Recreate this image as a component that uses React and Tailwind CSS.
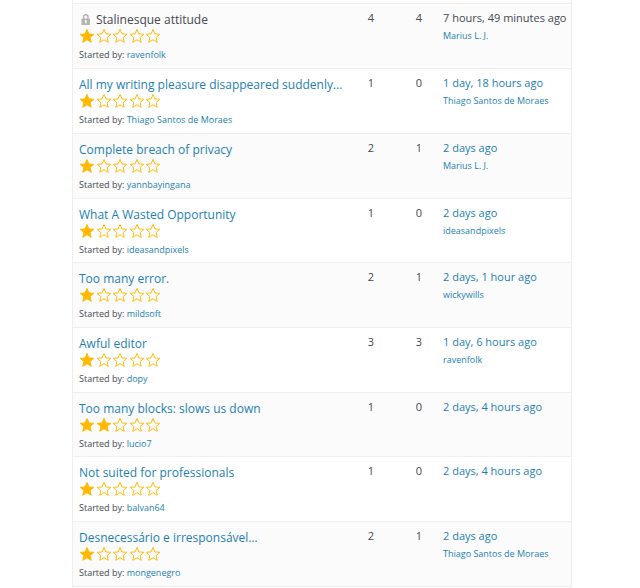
const topics = [
  { title: "Stalinesque attitude", closed: true, rating: 1, author: "ravenfolk", voices: 4, replies: 4, freshness: "7 hours, 49 minutes ago", last: "Marius L. J." },
  { title: "All my writing pleasure disappeared suddenly…", rating: 1, author: "Thiago Santos de Moraes", voices: 1, replies: 0, freshness: "1 day, 18 hours ago", last: "Thiago Santos de Moraes" },
  { title: "Complete breach of privacy", rating: 1, author: "yannbayingana", voices: 2, replies: 1, freshness: "2 days ago", last: "Marius L. J." },
  { title: "What A Wasted Opportunity", rating: 1, author: "ideasandpixels", voices: 1, replies: 0, freshness: "2 days ago", last: "ideasandpixels" },
  { title: "Too many error.", rating: 1, author: "mildsoft", voices: 2, replies: 1, freshness: "2 days, 1 hour ago", last: "wickywills" },
  { title: "Awful editor", rating: 1, author: "dopy", voices: 3, replies: 3, freshness: "1 day, 6 hours ago", last: "ravenfolk" },
  { title: "Too many blocks: slows us down", rating: 2, author: "lucio7", voices: 1, replies: 0, freshness: "2 days, 4 hours ago" },
  { title: "Not suited for professionals", rating: 1, author: "balvan64", voices: 1, replies: 0, freshness: "2 days, 4 hours ago" },
  { title: "Desnecessário e irresponsável…", rating: 1, author: "mongenegro", voices: 2, replies: 1, freshness: "2 days ago", last: "Thiago Santos de Moraes" },
];

const STAR = "M10 1.8l2.4 5.6 6.1.5-4.6 4 1.4 6-5.3-3.2-5.3 3.2 1.4-6-4.6-4 6.1-.5z";

const Stars = ({ rating }) => (
  <div
    className="flex h-4 w-[82px] items-center justify-between"
    role="img"
    aria-label={`${rating} out of 5 stars`}
  >
    {[1, 2, 3, 4, 5].map((n) => (
      <svg key={n} viewBox="0 0 20 20" className="size-4">
        <path
          d={STAR}
          fill={n <= rating ? "#ffb900" : "none"}
          stroke="#ffb900"
          strokeWidth="1.2"
        />
      </svg>
    ))}
  </div>
);

const Lock = () => (
  <svg viewBox="0 0 10 12" className="ml-0.5 mr-[5px] h-3 w-2.5 shrink-0" aria-hidden="true">
    <path d="M2.6 4.7V2.9a2.2 2.2 0 0 1 4.4 0v1.8" fill="none" stroke="#b4b4b4" strokeWidth="1.4" />
    <rect x="0.5" y="4.5" width="8.5" height="6.5" rx="0.5" fill="#b4b4b4" />
    <path d="M4.8 6a.9.9 0 0 1 .5 1.7l.3 1.6H4l.3-1.6A.9.9 0 0 1 4.8 6z" fill="#fafafa" />
  </svg>
);

const TopicRow = ({ topic }) => {
  const tone = topic.closed ? "text-[#444950]" : "text-[#1e7fb0]";

  return (
    <tr className="h-[65px] border-t border-[#eeeeee] align-top odd:bg-[#fbfbfb] nth-[3n+4]:h-[64px]">
      <td className="pl-1.5 pt-[7px]">
        <a href="#" className={`flex items-center text-[12px] leading-[17px] ${tone}`}>
          {topic.closed && <Lock />}
          {topic.title}
        </a>
        <Stars rating={topic.rating} />
        <p className="mt-[3px] text-[9px] leading-4">
          Started by:{" "}
          <a href="#" className="text-[#1e7fb0]">{topic.author}</a>
        </p>
      </td>
      <td className="pt-1.5 text-center text-[11px] leading-4">{topic.voices}</td>
      <td className="pt-1.5 text-center text-[11px] leading-4">{topic.replies}</td>
      <td className="whitespace-nowrap pt-1.5 text-[11px] leading-4">
        <a href="#" className={tone}>{topic.freshness}</a>
        {topic.last && (
          <p className="mt-0.5 text-[9px] leading-4">
            <a href="#" className="text-[#1e7fb0]">{topic.last}</a>
          </p>
        )}
      </td>
    </tr>
  );
};

export default function App() {
  return (
    <main className="bg-white pl-[72px] pr-[68px] font-['Open_Sans',sans-serif] text-[#444950]">
      <div className="border-x border-[#eeeeee] pt-[3px]">
        <table className="w-full table-fixed border-collapse border-b border-[#eeeeee]">
          <colgroup>
            <col />
            <col className="w-12" />
            <col className="w-12" />
            <col className="w-32" />
          </colgroup>
          <tbody>
            {topics.map((topic) => (
              <TopicRow key={topic.title} topic={topic} />
            ))}
          </tbody>
        </table>
      </div>
    </main>
  );
}
